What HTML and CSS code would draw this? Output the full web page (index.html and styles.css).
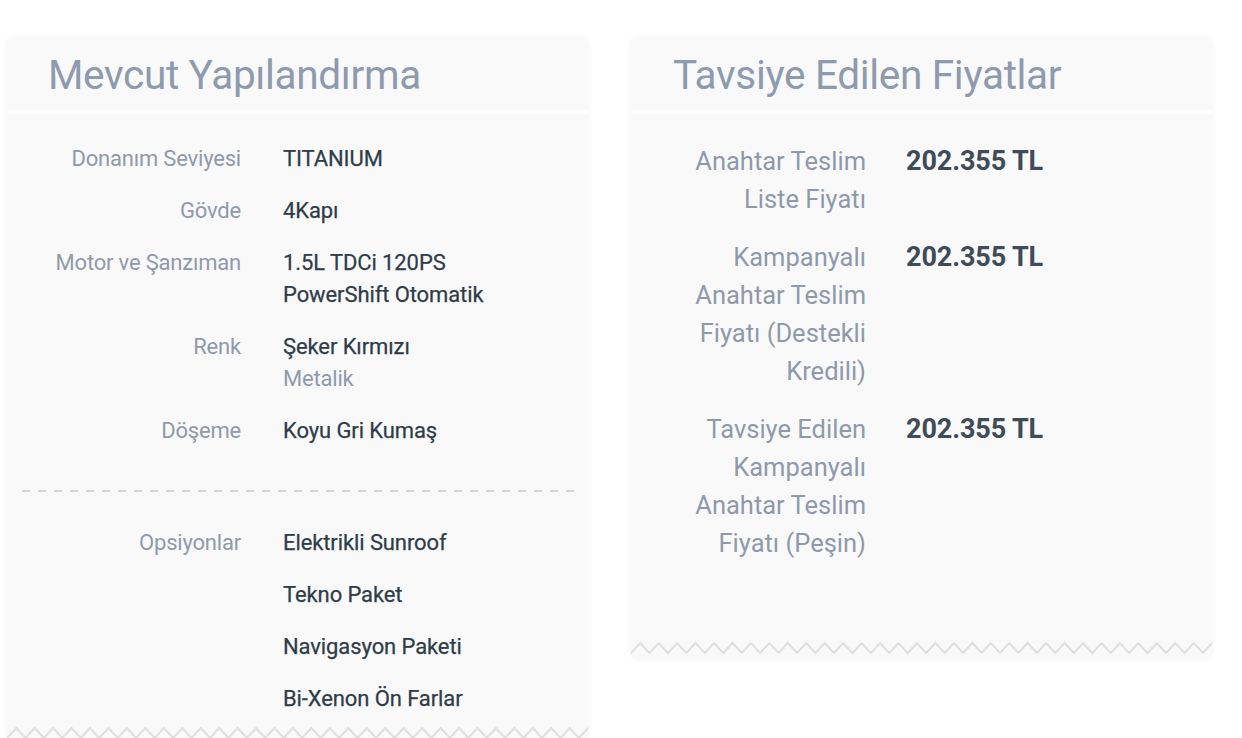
FILE: index.html
```html
<!DOCTYPE html>
<html lang="tr">
<head>
<meta charset="utf-8">
<title>Yapılandırma</title>
<link rel="stylesheet" href="styles.css">
</head>
<body>
<div class="cards">
  <section class="card card-config">
    <header class="card-head"><h2>Mevcut Yapılandırma</h2></header>
    <div class="card-body">
      <dl class="spec">
        <div class="row"><dt>Donanım Seviyesi</dt><dd>TITANIUM</dd></div>
        <div class="row"><dt>Gövde</dt><dd>4Kapı</dd></div>
        <div class="row"><dt>Motor ve Şanzıman</dt><dd>1.5L TDCi 120PS<br>PowerShift Otomatik</dd></div>
        <div class="row"><dt>Renk</dt><dd>Şeker Kırmızı<br><span class="muted">Metalik</span></dd></div>
        <div class="row"><dt>Döşeme</dt><dd>Koyu Gri Kumaş</dd></div>
      </dl>
      <div class="dashed"></div>
      <dl class="spec">
        <div class="row"><dt>Opsiyonlar</dt>
          <dd>
            <ul class="options">
              <li>Elektrikli Sunroof</li>
              <li>Tekno Paket</li>
              <li>Navigasyon Paketi</li>
              <li>Bi-Xenon Ön Farlar</li>
            </ul>
          </dd>
        </div>
      </dl>
    </div>
    <svg class="zigzag" width="100%" height="16" aria-hidden="true">
      <defs>
        <pattern id="zz1" width="18.45" height="16" patternUnits="userSpaceOnUse">
          <polyline points="-0.5,13.5 9.225,3 18.95,13.5" fill="none" stroke="#dedede" stroke-width="2"/>
        </pattern>
      </defs>
      <rect width="100%" height="16" fill="url(#zz1)"/>
    </svg>
  </section>

  <section class="card card-price">
    <header class="card-head"><h2>Tavsiye Edilen Fiyatlar</h2></header>
    <div class="card-body price-body">
      <dl class="prices">
        <div class="prow"><dt>Anahtar Teslim<br>Liste Fiyatı</dt><dd>202.355 TL</dd></div>
        <div class="prow"><dt>Kampanyalı<br>Anahtar Teslim<br>Fiyatı (Destekli<br>Kredili)</dt><dd>202.355 TL</dd></div>
        <div class="prow"><dt>Tavsiye Edilen<br>Kampanyalı<br>Anahtar Teslim<br>Fiyatı (Peşin)</dt><dd>202.355 TL</dd></div>
      </dl>
    </div>
    <svg class="zigzag" width="100%" height="16" aria-hidden="true">
      <defs>
        <pattern id="zz2" width="18.45" height="16" patternUnits="userSpaceOnUse">
          <polyline points="-0.5,13.5 9.225,3 18.95,13.5" fill="none" stroke="#dedede" stroke-width="2"/>
        </pattern>
      </defs>
      <rect width="100%" height="16" fill="url(#zz2)"/>
    </svg>
  </section>
</div>
</body>
</html>
```

FILE: styles.css
```css
* { box-sizing: border-box; }

html, body {
  margin: 0;
  padding: 0;
  background: #ffffff;
}

body {
  font-family: Roboto, "Liberation Sans", sans-serif;
  color: #3c4957;
}

.cards {
  display: flex;
  align-items: flex-start;
  gap: 43px;
  padding: 38px 0 0 7px;
}

.card {
  width: 581px;
  background: #f9f9f9;
  border-radius: 7px;
  box-shadow: 0 0 6px rgba(0, 0, 0, 0.06);
  padding-bottom: 3px;
}

.card-head {
  height: 76px;
  border-bottom: 4px solid #ffffff;
  display: flex;
  align-items: center;
  padding: 2px 0 0 41px;
}

.card-price .card-head {
  padding-left: 42px;
}

.card-head h2 {
  margin: 0;
  font-size: 40.6px;
  font-weight: 400;
  line-height: 1;
  letter-spacing: -0.35px;
  color: #8e9aae;
}

.card-body {
  padding: 29px 0 10px;
}

.spec {
  margin: 0;
  display: flex;
  flex-direction: column;
  gap: 20px;
}

.row {
  display: grid;
  grid-template-columns: 234px 1fr;
  column-gap: 42px;
  font-size: 22px;
  line-height: 32px;
}

.row dt {
  text-align: right;
  letter-spacing: -0.2px;
  color: #8e9aac;
}

.row dd {
  margin: 0;
  font-weight: 400;
  letter-spacing: -0.1px;
  color: #2f3c49;
  -webkit-text-stroke: 0.25px #2f3c49;
}

.muted {
  letter-spacing: -0.2px;
  color: #8e9aac;
  -webkit-text-stroke: 0;
}

.dashed {
  height: 2px;
  margin: 43px 13px 35px 15px;
  background: repeating-linear-gradient(90deg, #d3d3d3 0 8px, transparent 8px 16px);
}

.options {
  list-style: none;
  margin: 0;
  padding: 0;
  display: flex;
  flex-direction: column;
  gap: 20px;
}

.price-body {
  padding: 28px 0 78px;
}

.prices {
  margin: 0;
  display: flex;
  flex-direction: column;
  gap: 20px;
}

.prow {
  display: grid;
  grid-template-columns: 235px 1fr;
  column-gap: 40px;
  line-height: 38px;
}

.prow dt {
  text-align: right;
  font-size: 25.5px;
  color: #8e9aac;
}

.prow dd {
  margin: 0;
  font-size: 27px;
  font-weight: 700;
  letter-spacing: -0.1px;
  color: #3e4c59;
}

.zigzag {
  display: block;
}
```
